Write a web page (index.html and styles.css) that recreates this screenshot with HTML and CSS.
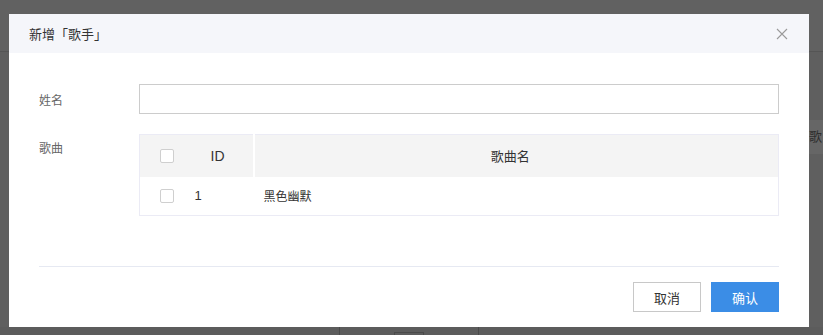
FILE: index.html
```html
<!DOCTYPE html>
<html lang="zh-CN">
<head>
<meta charset="UTF-8">
<meta name="viewport" content="width=device-width, initial-scale=1.0">
<title>新增「歌手」</title>
<link rel="stylesheet" href="styles.css">
</head>
<body>

<!-- 背后的页面（被遮罩盖住） -->
<div class="page">
  <div class="page-top"></div>
  <div class="page-side">歌</div>
  <div class="page-bottom">
    <span class="cell cell-a"></span>
    <span class="cell cell-b"><i></i></span>
  </div>
</div>

<!-- 遮罩和弹窗 -->
<div class="mask">
  <div class="dialog">
    <div class="dialog-header">
      <span class="dialog-title">新增「歌手」</span>
      <svg class="dialog-close" width="12" height="12" viewBox="0 0 12 12">
        <path d="M1 1 L11 11 M11 1 L1 11" stroke="#9a9a9a" stroke-width="1.1" fill="none"/>
      </svg>
    </div>

    <div class="dialog-body">
      <div class="form-row">
        <label class="form-label">姓名</label>
        <input class="form-input" type="text">
      </div>
      <div class="form-row">
        <label class="form-label label-top">歌曲</label>
        <table class="song-table">
          <thead>
            <tr>
              <th class="col-check"><span class="checkbox"></span></th>
              <th class="col-id">ID</th>
              <th class="col-name">歌曲名</th>
            </tr>
          </thead>
          <tbody>
            <tr>
              <td class="col-check"><span class="checkbox"></span></td>
              <td class="col-id">1</td>
              <td class="col-name">黑色幽默</td>
            </tr>
          </tbody>
        </table>
      </div>
    </div>

    <div class="dialog-footer">
      <button class="btn">取消</button>
      <button class="btn btn-primary">确认</button>
    </div>
  </div>
</div>

</body>
</html>
```

FILE: styles.css
```css
/* 基础 */
* {
  box-sizing: border-box;
}

body {
  margin: 0;
  width: 823px;
  height: 335px;
  overflow: hidden;
  background: #5f5f5f;
  font-family: "Liberation Sans", "Noto Sans CJK SC", sans-serif;
  font-size: 13px;
  color: #333;
}

/* 背后页面的残影 */
.page {
  position: relative;
  height: 335px;
}

.page-top {
  height: 52px;
  border-bottom: 1px solid #555;
  background: #616161;
}

.page-side {
  position: absolute;
  top: 120px;
  right: 0;
  width: 14px;
  height: 34px;
  padding-top: 8px;
  background: #666;
  color: #2e2e2e;
  font-family: "Noto Sans CJK SC", sans-serif;
  font-size: 13px;
  line-height: 16px;
  overflow: hidden;
  white-space: nowrap;
}

.page-bottom {
  position: absolute;
  top: 327px;
  left: 0;
  width: 100%;
  height: 8px;
  background: #5c5c5c;
}

.cell {
  position: absolute;
  top: 0;
  height: 8px;
  border-left: 1px solid #4a4a4a;
}

.cell-a {
  left: 339px;
}

.cell-b {
  left: 478px;
}

.cell-b i {
  position: absolute;
  top: 5px;
  left: -85px;
  width: 30px;
  height: 6px;
  border: 1px solid #4a4a4a;
}

/* 遮罩 */
.mask {
  position: absolute;
  top: 0;
  left: 0;
  width: 100%;
  height: 100%;
  padding: 14px 0 0 9px;
}

/* 弹窗 */
.dialog {
  width: 800px;
  height: 313px;
  background: #fff;
  display: flex;
  flex-direction: column;
}

.dialog-header {
  height: 39px;
  padding: 0 20px;
  background: #f5f6fa;
  display: flex;
  align-items: center;
  justify-content: space-between;
}

.dialog-title {
  font-family: "Noto Sans CJK SC", sans-serif;
  font-size: 13px;
  color: #333;
}

.dialog-close {
  margin-right: 1px;
}

.dialog-body {
  height: 214px;
  margin: 0 30px;
  padding-top: 31px;
  display: flex;
  flex-direction: column;
  gap: 20px;
  border-bottom: 1px solid #e6e9f2;
}

.form-row {
  display: flex;
  align-items: center;
}

.form-label {
  width: 100px;
  color: #666;
  font-family: "Noto Sans CJK SC", sans-serif;
  font-size: 12px;
}

.label-top {
  align-self: flex-start;
  padding-top: 5px;
}

.form-input {
  flex: 1;
  height: 30px;
  border: 1px solid #cccccc;
  border-radius: 0;
  outline: none;
  margin: 0;
}

/* 歌曲表格 */
.song-table {
  flex: 1;
  border-collapse: collapse;
  border: 1px solid #ebebf5;
  table-layout: fixed;
}

.song-table th {
  height: 42px;
  background: #f4f4f4;
  font-weight: normal;
  font-size: 14px;
  color: #333;
  padding: 0;
}

.song-table td {
  height: 39px;
  padding: 0;
  font-size: 13px;
  color: #333;
}

.song-table .col-check {
  width: 40px;
  padding-left: 20px;
  text-align: left;
}

.song-table .col-id {
  width: 74px;
  text-align: center;
}

.song-table th.col-id {
  padding-left: 3px;
}

.song-table th.col-name {
  border-left: 2px solid #fff;
  padding-right: 12px;
  font-family: "Noto Sans CJK SC", sans-serif;
  font-size: 13px;
}

.song-table td.col-id {
  padding-left: 15px;
  text-align: left;
}

.song-table td.col-name {
  padding-left: 10px;
  font-family: "Noto Sans CJK SC", sans-serif;
  font-size: 12px;
}

.checkbox {
  display: block;
  width: 14px;
  height: 14px;
  border: 1px solid #cfcfcf;
  border-radius: 2px;
  background: #fff;
}

/* 底部按钮 */
.dialog-footer {
  flex: 1;
  padding: 0 30px;
  display: flex;
  align-items: center;
  justify-content: flex-end;
  gap: 10px;
}

.btn {
  width: 68px;
  height: 30px;
  margin: 0;
  border: 1px solid #c8c8c8;
  background: #fff;
  color: #333;
  font-family: "Noto Sans CJK SC", sans-serif;
  font-size: 13px;
  cursor: pointer;
}

.btn-primary {
  border-color: #3b8de6;
  background: #3b8de6;
  color: #fff;
}
```
